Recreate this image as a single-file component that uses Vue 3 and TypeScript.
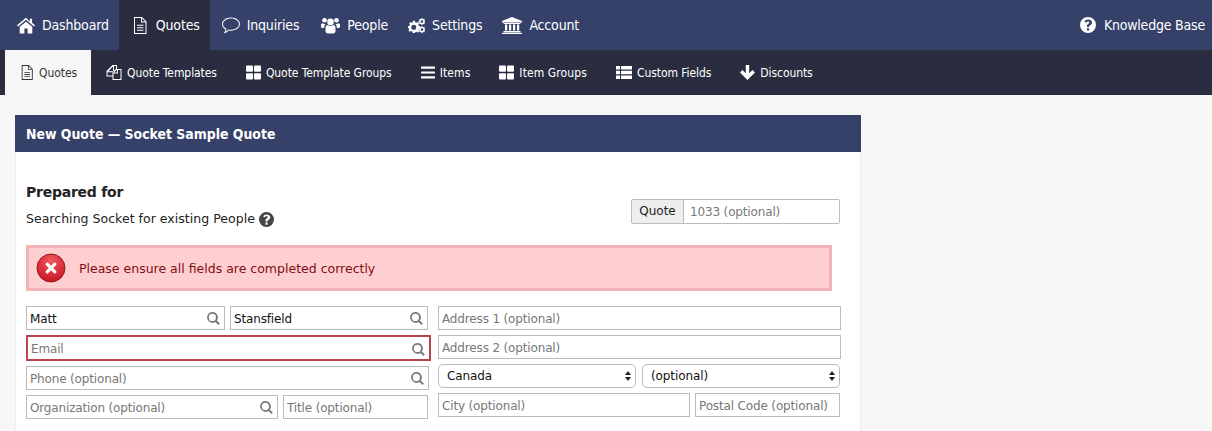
<script setup lang="ts">
const mainNav = [
  { label: 'Dashboard', icon: 'home', w: 18 },
  { label: 'Quotes', icon: 'file', w: 18, active: true },
  { label: 'Inquiries', icon: 'comment', w: 18 },
  { label: 'People', icon: 'users', w: 19 },
  { label: 'Settings', icon: 'cogs', w: 17, tight: true },
  { label: 'Account', icon: 'bank', w: 20, tight: true }
]
const subNav = [
  { label: 'Quotes', icon: 'file', w: 14, active: true },
  { label: 'Quote Templates', icon: 'files', w: 16 },
  { label: 'Quote Template Groups', icon: 'grid', w: 15 },
  { label: 'Items', icon: 'bars', w: 14, loose: true },
  { label: 'Item Groups', icon: 'grid', w: 15, loose: true },
  { label: 'Custom Fields', icon: 'list', w: 16 },
  { label: 'Discounts', icon: 'down', w: 15 }
]
</script>

<template>
  <div class="page">
    <svg class="defs" width="0" height="0" aria-hidden="true">
      <defs>
        <symbol id="home" viewBox="0 0 16 14"><path d="M8 0 0 6.800l.9 1L8 1.900l7.100 5.900.9-1-2.600-2.200V1h-2v2.700zM2.400 8.200V14h4.200V9.700h2.800V14h4.200V8.200L8 3.600z"/></symbol>
        <symbol id="file" viewBox="0 0 14 17"><path fill-rule="evenodd" d="M1 0h8l4.500 4.500V17H1zm1 1v15h10.500V5.500H8V1zm7 .4v3.100h3.100zM4 7.800h6.500v.9H4zm0 2.500h6.500v.9H4zm0 2.500h6.500v.9H4z"/></symbol>
        <symbol id="comment" viewBox="0 0 18 16"><path fill-rule="evenodd" d="M9 0c5 0 9 2.900 9 6.600s-4 6.600-9 6.600c-.8 0-1.500-.1-2.200-.2C5.500 14.500 3.500 15.500 1.500 16c1-1.200 1.700-2.400 1.800-4.100C1.300 10.700 0 8.800 0 6.600 0 2.900 4 0 9 0zm0 1C4.700 1 1 3.500 1 6.600c0 1.900 1.400 3.600 3.400 4.600-.1 1.300-.4 2.200-.9 3 1.200-.6 2.200-1.400 2.900-2.300.8.200 1.700.3 2.600.3 4.300 0 8-2.500 8-5.600S13.300 1 9 1z"/></symbol>
        <symbol id="users" viewBox="0 0 19 16"><circle cx="9.500" cy="4.400" r="3.300"/><circle cx="3.500" cy="2.800" r="2.300"/><circle cx="15.500" cy="2.800" r="2.300"/><path d="M4.500 10.500c0-2 1.200-3 2.500-3 .8.700 1.500 1 2.500 1s1.700-.3 2.500-1c1.300 0 2.500 1 2.500 3v3c0 1.500-1 2.500-2.500 2.500H7c-1.500 0-2.500-1-2.500-2.500zM0 7.500c0-1 .8-1.800 1.700-1.800.6.500 1.200.7 2.100.7.400 0 .6.500.4.800-.8.700-1.100 1.900-1.100 3.300H1.200C.5 10.500 0 10 0 9.300zm19 0c0-1-.8-1.800-1.700-1.800-.6.500-1.200.7-2.100.7-.4 0-.6.500-.4.800.8.700 1.100 1.900 1.100 3.300h1.900c.7 0 1.200-.5 1.200-1.200z"/></symbol>
        <symbol id="cogs" viewBox="0 0 18 16"><path fill-rule="evenodd" d="M5 3h2.300l.4 1.600 1.200.5 1.400-.8 1.500 1.500-.8 1.400.5 1.200L13 8.800V11l-1.500.4-.5 1.200.8 1.400-1.500 1.500-1.400-.8-1.200.5L7.300 16H5l-.4-1.600-1.200-.5-1.400.8L.5 13.200l.8-1.400-.5-1.200L0 11V8.800l1.500-.4.500-1.200-.8-1.400 1.500-1.500 1.400.8 1.200-.5zm1.100 4.200a2.700 2.700 0 1 0 0 5.400 2.700 2.700 0 0 0 0-5.400z"/><path fill-rule="evenodd" d="M14.300 0h1l.2 1 .8.300.8-.5.700.7-.5.8.3.8 1 .2v1l-1 .2-.3.8.5.8-.7.700-.8-.5-.8.3-.2 1h-1l-.2-1-.8-.3-.8.500-.7-.7.500-.8-.3-.8-1-.2v-1l1-.2.3-.8-.5-.8.700-.7.800.5.800-.3zm.5 2.400a1.400 1.400 0 1 0 0 2.800 1.400 1.400 0 0 0 0-2.800zM14.300 8.500h1l.2 1 .8.300.8-.5.700.7-.5.800.3.800 1 .2v1l-1 .2-.3.800.5.800-.7.700-.8-.5-.8.300-.2 1h-1l-.2-1-.8-.3-.8.500-.7-.7.500-.8-.3-.8-1-.2v-1l1-.2.3-.8-.5-.8.700-.7.800.5.800-.3zm.5 2.400a1.400 1.400 0 1 0 0 2.800 1.400 1.400 0 0 0 0-2.800z"/></symbol>
        <symbol id="bank" viewBox="0 0 20 17"><path d="M10 0 20 4v1.400H0V4zM1.500 6h17v1h-17zM3 7.500h2.200v6H3zm4 0h2.200v6H7zm4 0h2.200v6H11zm4 0h2.200v6H15zM1.500 14h17v1.200h-17zM0 15.700h20V17H0z"/></symbol>
        <symbol id="files" viewBox="0 0 15 15"><path fill-rule="evenodd" d="M6 0h4.500v4H15v11H6v-3.500H0V6zm.5 1.500L1.800 6.200h4.700zm3 -.5H7.500v6.200H1v3.300h5V7.300L9.500 3.800zm1 3.700L7.600 7.600h2.900zM11.500 5v3.600H7V14h7V5z"/></symbol>
        <symbol id="grid" viewBox="0 0 15 14"><rect width="7" height="6.300" rx="1"/><rect x="8" width="7" height="6.300" rx="1"/><rect y="7.700" width="7" height="6.300" rx="1"/><rect x="8" y="7.700" width="7" height="6.300" rx="1"/></symbol>
        <symbol id="bars" viewBox="0 0 14 12"><rect width="14" height="2.200" rx=".5"/><rect y="4.900" width="14" height="2.200" rx=".5"/><rect y="9.800" width="14" height="2.200" rx=".5"/></symbol>
        <symbol id="list" viewBox="0 0 16 13"><path d="M0 0h4v3.600H0zm5 0h11v3.600H5zM0 4.700h4v3.600H0zm5 0h11v3.600H5zM0 9.400h4V13H0zm5 0h11V13H5z"/></symbol>
        <symbol id="down" viewBox="0 0 14 14"><path d="M5.400 0h3.200v7.700L11.700 4.700 14 7l-7 7-7-7 2.300-2.300 3.100 3z"/></symbol>
        <symbol id="help" viewBox="0 0 16 16"><path fill-rule="evenodd" d="M8 0a8 8 0 1 1 0 16A8 8 0 0 1 8 0zM6.900 11.300v2.300h2.300v-2.300zM8.100 2.600c-1.700 0-3 .9-3.700 2l1.600 1.200c.4-.6 1-1.200 1.900-1.200.8 0 1.400.4 1.400 1s-.6.900-1.200 1.300c-.9.500-1.200 1.200-1.200 2.200v1h2.300v-.8c0-.5.300-.7.900-1 1-.6 1.900-1.300 1.900-2.800 0-1.700-1.900-2.900-3.900-2.900z"/></symbol>
        <symbol id="search" viewBox="0 0 13 13"><path d="M5.400 0a5.400 5.400 0 0 1 4.400 8.600l3 3-1.300 1.300-3-3A5.400 5.400 0 1 1 5.400 0zm0 1.800a3.600 3.600 0 1 0 0 7.200 3.600 3.600 0 0 0 0-7.200z"/></symbol>
        <radialGradient id="redBall" cx="50%" cy="25%" r="80%"><stop offset="0" stop-color="#f4575f"/><stop offset="1" stop-color="#c8141f"/></radialGradient>
      </defs>
    </svg>

    <nav class="main-nav">
      <a v-for="item in mainNav" :key="item.label" class="main-item" :class="{ active: item.active, tight: item.tight }">
        <svg class="icon" :width="item.w" height="17"><use :href="'#' + item.icon" /></svg>
        {{ item.label }}
      </a>
      <a class="main-item kb">
        <svg class="icon" width="16" height="16"><use href="#help" /></svg>
        Knowledge Base
      </a>
    </nav>

    <nav class="sub-nav">
      <a v-for="item in subNav" :key="item.label" class="sub-item" :class="{ active: item.active, loose: item.loose }">
        <svg class="icon" :width="item.w" height="15"><use :href="'#' + item.icon" /></svg>
        {{ item.label }}
      </a>
    </nav>

    <section class="card">
      <h1 class="card-title">New Quote — Socket Sample Quote</h1>
      <div class="card-body">
        <div class="intro">
          <div>
            <h2>Prepared for</h2>
            <p>Searching Socket for existing People
              <svg class="help" width="15" height="15"><use href="#help" /></svg>
            </p>
          </div>
          <div class="quote-no">
            <span class="addon">Quote</span>
            <input class="quote-input" placeholder="1033 (optional)" />
          </div>
        </div>

        <div class="alert">
          <svg width="30" height="30" viewBox="0 0 30 30">
            <circle cx="15" cy="15" r="14" fill="url(#redBall)" stroke="#8d1a20" />
            <path d="m11.200 11.200 7.600 7.600m0-7.600-7.600 7.600" stroke="#fff" stroke-width="3.200" stroke-linecap="round" />
          </svg>
          <span>Please ensure all fields are completed correctly</span>
        </div>

        <div class="form">
          <div class="col left">
            <div class="row">
              <label class="field w199"><input value="Matt" /><svg class="s" width="13" height="13"><use href="#search" /></svg></label>
              <label class="field w198"><input value="Stansfield" /><svg class="s" width="13" height="13"><use href="#search" /></svg></label>
            </div>
            <label class="field error"><input placeholder="Email" /><svg class="s" width="13" height="13"><use href="#search" /></svg></label>
            <label class="field wide"><input placeholder="Phone (optional)" /><svg class="s" width="13" height="13"><use href="#search" /></svg></label>
            <div class="row">
              <label class="field w252"><input placeholder="Organization (optional)" /><svg class="s" width="13" height="13"><use href="#search" /></svg></label>
              <label class="field w145"><input placeholder="Title (optional)" /></label>
            </div>
          </div>
          <div class="col right">
            <label class="field wide"><input placeholder="Address 1 (optional)" /></label>
            <label class="field wide"><input placeholder="Address 2 (optional)" /></label>
            <div class="row gap6">
              <div class="select">Canada<span class="updown"></span></div>
              <div class="select">(optional)<span class="updown"></span></div>
            </div>
            <div class="row">
              <label class="field w252"><input placeholder="City (optional)" /></label>
              <label class="field w145"><input placeholder="Postal Code (optional)" /></label>
            </div>
          </div>
        </div>
      </div>
    </section>
  </div>
</template>

<style>
html, body { margin: 0; background: #f7f7f7; overflow: hidden; }
</style>

<style scoped>
.page { height: 431px; overflow: hidden; background: #f7f7f7; font-family: "DejaVu Sans", Verdana, sans-serif; }
.defs { position: absolute; }
.main-nav { height: 50px; display: flex; padding-left: 5px; background: #36416a; }
.main-item { display: flex; align-items: center; gap: 7px; padding: 0 10px 0 12px; color: #fff; font: 14px "DejaVu Sans Condensed", "DejaVu Sans", sans-serif; font-stretch: condensed; letter-spacing: -0.17px; }
.main-item.active { background: #2a2d40; }
.main-item.tight { padding-left: 10px; }
.main-item.kb { margin-left: auto; padding: 0 7px 0 0; gap: 8px; letter-spacing: -0.2px; }
.icon { fill: currentColor; flex: none; }
.sub-nav { height: 45px; display: flex; padding-left: 5px; background: #2a2d40; }
.sub-item { display: flex; align-items: center; gap: 5px; padding: 0 14px 0 15px; color: #fff; font: 12px "DejaVu Sans Condensed", "DejaVu Sans", sans-serif; font-stretch: condensed; letter-spacing: -0.07px; }
.sub-item.loose { letter-spacing: 0.1px; }
.sub-item.active { background: #f7f7f7; color: #333; }
.card { width: 846px; height: 400px; margin: 20px 0 0 15px; background: #fff; box-sizing: border-box; border-right: 1px solid #eee; border-left: 1px solid #eee; }
.card-title { margin: 0 -1px; height: 37px; padding-left: 11px; background: #36416a; color: #fff; font: bold 13.900px/38px "DejaVu Sans Condensed", "DejaVu Sans", sans-serif; font-stretch: condensed; }
.card-body { padding: 0 0 0 10px; }
.intro { display: flex; justify-content: space-between; width: 814px; height: 93px; }
h2 { margin: 31px 0 0; font-size: 14px; letter-spacing: -0.25px; line-height: 18px; color: #222; font-weight: bold; }
p { margin: 9px 0 0; font-size: 12.500px; letter-spacing: 0.03px; line-height: 18px; color: #222; display: flex; align-items: center; gap: 4px; }
.help { fill: #444; }
.quote-no { display: flex; width: 209px; height: 25px; margin-top: 47px; box-sizing: border-box; border: 1px solid #bbb; border-radius: 2px; font-size: 12px; }
.addon { width: 52px; background: #eee; border-right: 1px solid #bbb; text-align: center; line-height: 23px; color: #222; box-sizing: border-box; }
.quote-input { flex: 1; min-width: 0; border: 0; outline: 0; padding: 0 6px; font: 12px "DejaVu Sans", sans-serif; letter-spacing: -0.15px; background: #fff; }
input::placeholder { color: #777; opacity: 1; }
.alert { width: 806px; height: 46px; box-sizing: border-box; border: 3px solid #f2b3b6; background: #ffcfd0; display: flex; align-items: center; gap: 13px; padding-left: 7px; color: #7f0d14; font-size: 12.500px; line-height: 16px; }
.alert span { padding-top: 2px; }
.form { display: flex; gap: 7px; margin-top: 15px; }
.col { display: flex; flex-direction: column; gap: 5px; }
.left { width: 405px; }
.right { width: 403px; }
.row { display: flex; gap: 5px; }
.gap6 { gap: 6px; }
.field { position: relative; display: block; height: 24px; flex: none; }
.w199 { width: 199px; }
.w198 { width: 198px; }
.w252 { width: 252px; }
.w145 { width: 145px; }
.wide { width: 403px; }
.field input { width: 100%; height: 100%; box-sizing: border-box; border: 1px solid #bbb; outline: 0; padding: 2px 3px 0; font: 12px "DejaVu Sans", sans-serif; letter-spacing: -0.15px; color: #111; background: #fff; }
.field .s { position: absolute; right: 5px; top: 6px; fill: #777; }
.error { height: 26px; width: 405px; }
.error input { border: 2px solid #b8444c; padding: 2px 3px 0; }
.error .s { right: 6px; top: 8px; }
.select { position: relative; width: 198px; height: 24px; box-sizing: border-box; border: 1px solid #bbb; border-radius: 5px; padding-left: 8px; line-height: 22px; font-size: 12px; letter-spacing: -0.1px; color: #111; background: #fff; }
.updown { position: absolute; right: 4px; top: 6px; width: 0; height: 0; border: 3px solid transparent; border-bottom: 4px solid #222; border-top: 0; }
.updown::after { content: ""; position: absolute; left: -3px; top: 6px; border: 3px solid transparent; border-top: 4px solid #222; border-bottom: 0; }
</style>
